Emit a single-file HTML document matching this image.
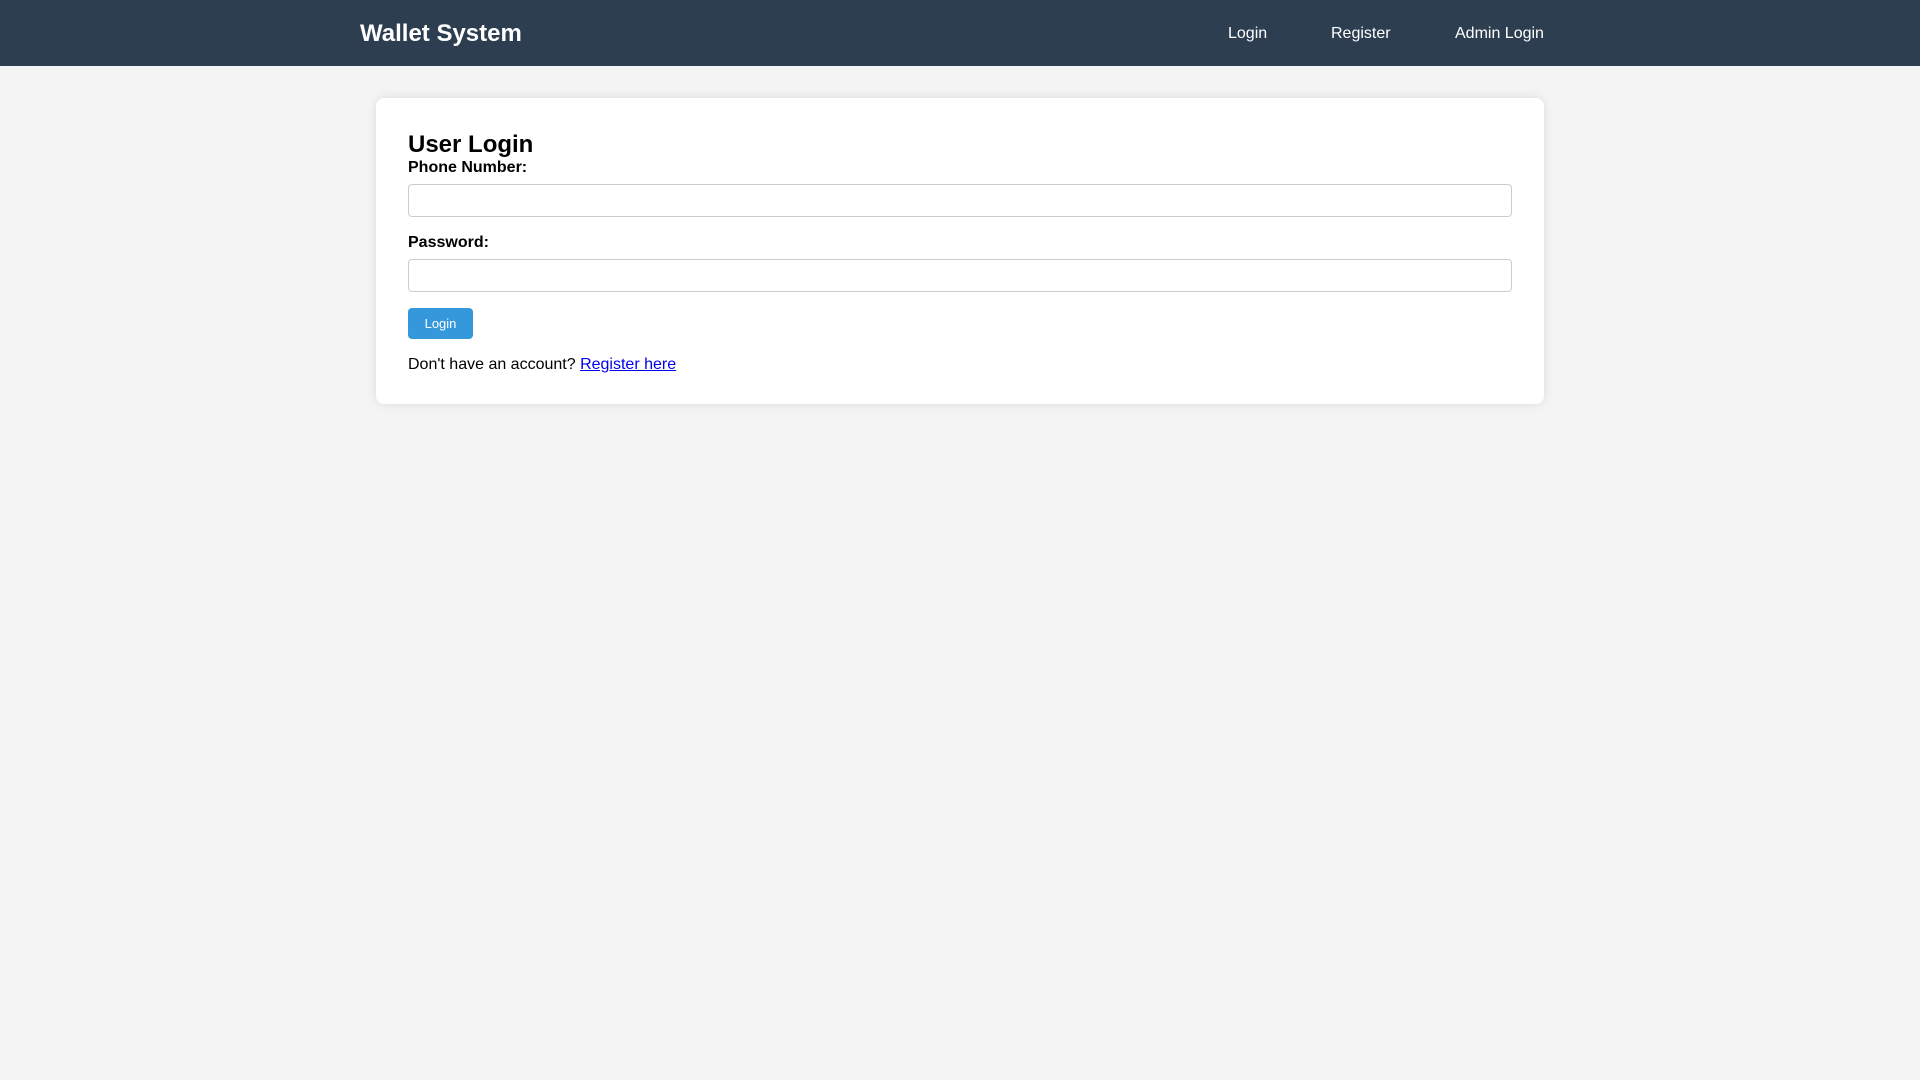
<!DOCTYPE html>
<html><head><style>
body{margin:0;background:#f4f4f4;font-family:"Liberation Sans",Arial,sans-serif;width:1920px;height:1080px;position:relative;overflow:hidden}
.nav{position:absolute;left:0;top:0;width:1920px;height:66px;background:#2c3e50;color:#fff}
.nav .t{position:absolute;left:360px;top:20px;font-size:24px;font-weight:bold;line-height:28px}
.nav a{position:absolute;top:25px;font-size:16px;line-height:18px;color:#fff;text-decoration:none}
.card{position:absolute;left:376px;top:98px;width:1168px;height:306px;background:#fff;border-radius:8px;box-shadow:0 0 10px rgba(0,0,0,0.1)}
.a{position:absolute;left:408px}
h2{margin:0;font-size:24px;line-height:28px;top:131px}
.l{font-weight:bold;font-size:16px;line-height:18px}
.in{width:1104px;height:33px;box-sizing:border-box;border:1px solid #ccc;border-radius:4px;background:#fff}
.btn{background:#3498db;color:#fff;border-radius:4px;width:65px;height:31px;font-size:13px;line-height:32px;text-align:center}
.p{font-size:16px;line-height:18px}
.p a{color:#0000ee}
</style></head><body>
<div class="nav"><div class="t">Wallet System</div>
<a style="left:1228px">Login</a><a style="left:1331px">Register</a><a style="left:1455px">Admin Login</a></div>
<div class="card"></div>
<h2 class="a">User Login</h2>
<div class="a l" style="top:159px">Phone Number:</div>
<div class="a in" style="top:184px"></div>
<div class="a l" style="top:234px">Password:</div>
<div class="a in" style="top:259px"></div>
<div class="a btn" style="top:308px">Login</div>
<div class="a p" style="top:356px">Don't have an account? <a href="#">Register here</a></div>
</body></html>
